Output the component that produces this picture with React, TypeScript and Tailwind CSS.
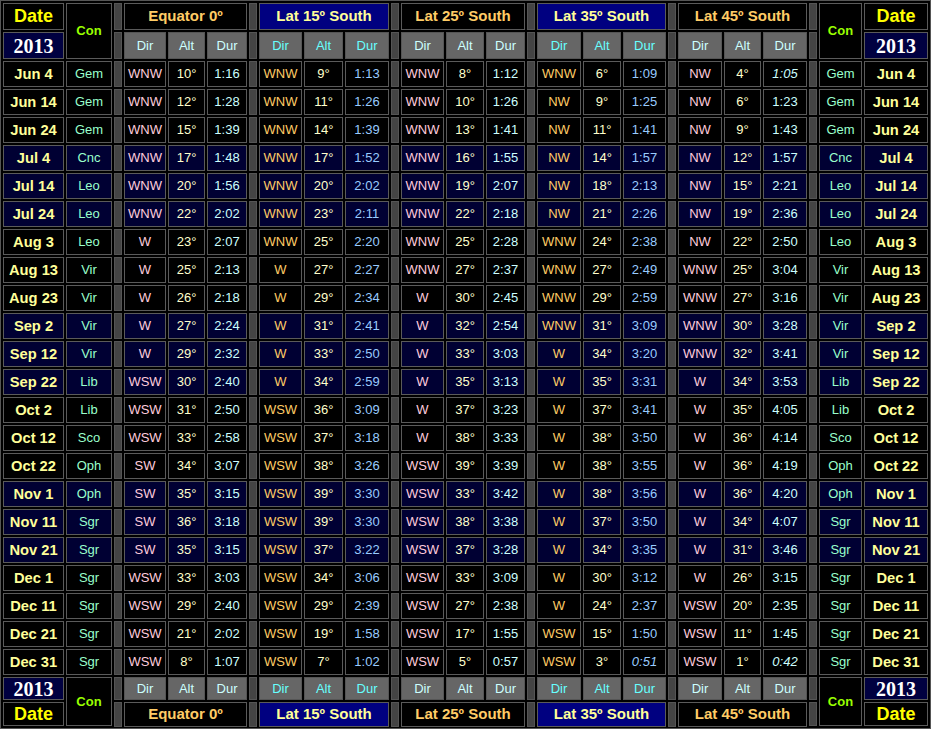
import type { ReactNode } from "react";

type Obs = [string, string, string];
type Row = { date: string; con: string; obs: Obs[] };

const groups = [
  { title: "Equator 0º", blue: false },
  { title: "Lat 15º South", blue: true },
  { title: "Lat 25º South", blue: false },
  { title: "Lat 35º South", blue: true },
  { title: "Lat 45º South", blue: false },
];

// a "*" after a duration means it is printed in italics
const raw: [string, string, string][] = [
  ["Jun 4", "Gem", "WNW 10 1:16|WNW 9 1:13|WNW 8 1:12|WNW 6 1:09|NW 4 1:05*"],
  ["Jun 14", "Gem", "WNW 12 1:28|WNW 11 1:26|WNW 10 1:26|NW 9 1:25|NW 6 1:23"],
  ["Jun 24", "Gem", "WNW 15 1:39|WNW 14 1:39|WNW 13 1:41|NW 11 1:41|NW 9 1:43"],
  ["Jul 4", "Cnc", "WNW 17 1:48|WNW 17 1:52|WNW 16 1:55|NW 14 1:57|NW 12 1:57"],
  ["Jul 14", "Leo", "WNW 20 1:56|WNW 20 2:02|WNW 19 2:07|NW 18 2:13|NW 15 2:21"],
  ["Jul 24", "Leo", "WNW 22 2:02|WNW 23 2:11|WNW 22 2:18|NW 21 2:26|NW 19 2:36"],
  ["Aug 3", "Leo", "W 23 2:07|WNW 25 2:20|WNW 25 2:28|WNW 24 2:38|NW 22 2:50"],
  ["Aug 13", "Vir", "W 25 2:13|W 27 2:27|WNW 27 2:37|WNW 27 2:49|WNW 25 3:04"],
  ["Aug 23", "Vir", "W 26 2:18|W 29 2:34|W 30 2:45|WNW 29 2:59|WNW 27 3:16"],
  ["Sep 2", "Vir", "W 27 2:24|W 31 2:41|W 32 2:54|WNW 31 3:09|WNW 30 3:28"],
  ["Sep 12", "Vir", "W 29 2:32|W 33 2:50|W 33 3:03|W 34 3:20|WNW 32 3:41"],
  ["Sep 22", "Lib", "WSW 30 2:40|W 34 2:59|W 35 3:13|W 35 3:31|W 34 3:53"],
  ["Oct 2", "Lib", "WSW 31 2:50|WSW 36 3:09|W 37 3:23|W 37 3:41|W 35 4:05"],
  ["Oct 12", "Sco", "WSW 33 2:58|WSW 37 3:18|W 38 3:33|W 38 3:50|W 36 4:14"],
  ["Oct 22", "Oph", "SW 34 3:07|WSW 38 3:26|WSW 39 3:39|W 38 3:55|W 36 4:19"],
  ["Nov 1", "Oph", "SW 35 3:15|WSW 39 3:30|WSW 33 3:42|W 38 3:56|W 36 4:20"],
  ["Nov 11", "Sgr", "SW 36 3:18|WSW 39 3:30|WSW 38 3:38|W 37 3:50|W 34 4:07"],
  ["Nov 21", "Sgr", "SW 35 3:15|WSW 37 3:22|WSW 37 3:28|W 34 3:35|W 31 3:46"],
  ["Dec 1", "Sgr", "WSW 33 3:03|WSW 34 3:06|WSW 33 3:09|W 30 3:12|W 26 3:15"],
  ["Dec 11", "Sgr", "WSW 29 2:40|WSW 29 2:39|WSW 27 2:38|W 24 2:37|WSW 20 2:35"],
  ["Dec 21", "Sgr", "WSW 21 2:02|WSW 19 1:58|WSW 17 1:55|WSW 15 1:50|WSW 11 1:45"],
  ["Dec 31", "Sgr", "WSW 8 1:07|WSW 7 1:02|WSW 5 0:57|WSW 3 0:51*|WSW 1 0:42*"],
];

const rows: Row[] = raw.map(([date, con, s]) => ({
  date,
  con,
  obs: s.split("|").map((o) => o.split(" ") as Obs),
}));

// rows in the Jul, Sep and Nov blocks are shaded navy
const navyRows = new Set([3, 4, 5, 9, 10, 11, 15, 16, 17]);

function Cell({ className = "", children }: { className?: string; children?: ReactNode }) {
  return (
    <div className={`flex items-center justify-center border border-[#5a5a5a] whitespace-nowrap ${className}`}>
      {children}
    </div>
  );
}

function Sep() {
  return <div className="border border-[#555] bg-[#444]" />;
}

function Titles({ keyPrefix }: { keyPrefix: string }) {
  return (
    <>
      {groups.map((g) => (
        <div key={keyPrefix + g.title} className="col-span-4 grid grid-cols-[8px_1fr] gap-[2px]">
          <Sep />
          <Cell
            className={`text-[15px] font-bold ${g.blue ? "bg-[#000080] text-[#ffff99]" : "bg-black text-[#ffcc66]"}`}
          >
            {g.title}
          </Cell>
        </div>
      ))}
      <Sep />
    </>
  );
}

function SubHeads({ keyPrefix }: { keyPrefix: string }) {
  return (
    <>
      {groups.map((g, i) => {
        const color = g.blue ? "text-[#66ffff]" : "text-[#ccffff]";
        return [
          <Sep key={`${keyPrefix}s${i}`} />,
          ...["Dir", "Alt", "Dur"].map((h) => (
            <Cell key={`${keyPrefix}${i}${h}`} className={`bg-[#666] border-[#555] text-[13px] ${color}`}>
              {h}
            </Cell>
          )),
        ];
      })}
      <Sep />
    </>
  );
}

function DateHead() {
  return <Cell className="bg-black text-[18px] font-bold text-[#ffff00]">Date</Cell>;
}

function YearHead() {
  return (
    <Cell className="bg-[#000040] text-[20px] font-bold text-white [font-family:'Liberation_Serif',serif]">2013</Cell>
  );
}

function ConHead() {
  return <Cell className="row-span-2 bg-black text-[13px] font-bold text-[#99ff00]">Con</Cell>;
}

function DataRow({ row, index }: { row: Row; index: number }) {
  const bg = navyRows.has(index) ? "bg-[#000033]" : "bg-black";
  return (
    <>
      <Cell className={`${bg} text-[14.7px] font-bold text-[#ffff99]`}>{row.date}</Cell>
      <Cell className={`${bg} text-[13px] text-[#99ffcc]`}>{row.con}</Cell>
      {row.obs.map(([dir, alt, dur], g) => {
        const blue = groups[g].blue;
        const italic = dur.endsWith("*");
        return [
          <Sep key={`s${g}`} />,
          <Cell key={`d${g}`} className={`${bg} text-[13px] ${blue ? "text-[#ffcc66]" : "text-[#ffccdd]"}`}>
            {dir}
          </Cell>,
          <Cell key={`a${g}`} className={`${bg} text-[13px] text-[#ffffcc]`}>
            {alt}°
          </Cell>,
          <Cell
            key={`u${g}`}
            className={`${bg} text-[13px] ${blue ? "text-[#99ccff]" : "text-[#ccffff]"} ${italic ? "italic" : ""}`}
          >
            {dur.replace("*", "")}
          </Cell>,
        ];
      })}
      <Sep />
      <Cell className={`${bg} text-[13px] text-[#99ffcc]`}>{row.con}</Cell>
      <Cell className={`${bg} text-[14.7px] font-bold text-[#ffff99]`}>{row.date}</Cell>
    </>
  );
}

export default function App() {
  return (
    <div className="h-[729px] w-[931px] overflow-hidden border border-[#555] bg-black p-[2px] [font-family:'Liberation_Sans',Arial,sans-serif]">
      <div className="grid grid-cols-[61px_46px_8px_42px_37px_40px_8px_43px_39px_44px_8px_43px_38px_39px_8px_44px_38px_43px_8px_44px_37px_44px_8px_43px_64px] grid-rows-[27px_27px_repeat(22,26px)_23px_24px] gap-[2px]">
        {/* top header */}
        <DateHead />
        <ConHead />
        <Titles keyPrefix="t" />
        <ConHead />
        <DateHead />
        <YearHead />
        <SubHeads keyPrefix="t" />
        <YearHead />

        {rows.map((row, i) => (
          <DataRow key={row.date} row={row} index={i} />
        ))}

        {/* bottom header */}
        <YearHead />
        <ConHead />
        <SubHeads keyPrefix="b" />
        <ConHead />
        <YearHead />
        <DateHead />
        <Titles keyPrefix="b" />
        <DateHead />
      </div>
    </div>
  );
}
